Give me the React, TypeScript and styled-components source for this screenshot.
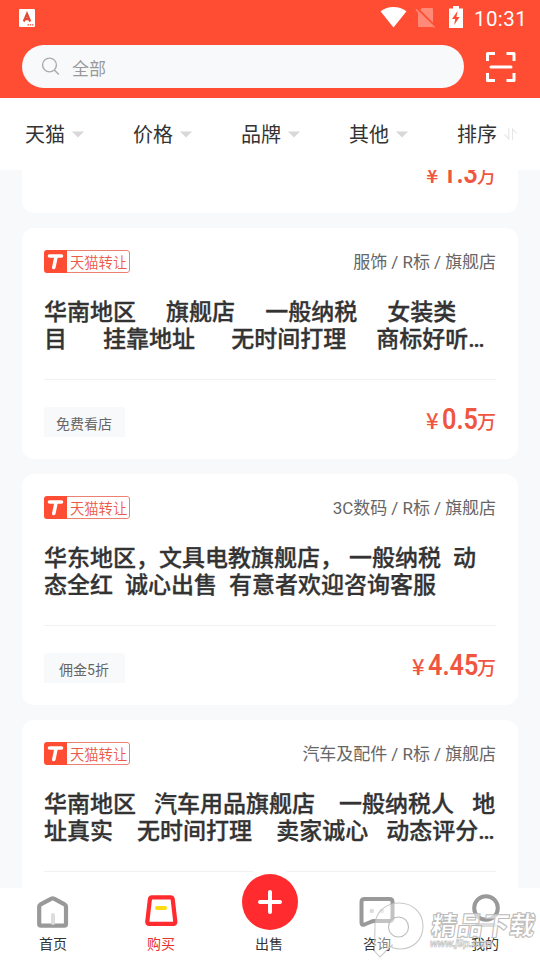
import React from 'react';
import styled, { createGlobalStyle } from 'styled-components';

const GlobalStyle = createGlobalStyle`
  * { box-sizing: border-box; }
  body { margin: 0; background: #f8f9fb; font-family: Roboto, "Noto Sans CJK SC", sans-serif; }
`;

const Screen = styled.div`
  position: relative;
  width: 540px;
  height: 960px;
  display: flex;
  flex-direction: column;
  overflow: hidden;
  background: #f8f9fb;
`;

const Header = styled.header`
  flex: none;
  height: 98px;
  background: #ff4d33;
`;

const StatusBar = styled.div`
  height: 36px;
  padding: 0 13px 0 19px;
  display: flex;
  align-items: center;
  color: #fff;
`;

const StatusIcons = styled.div`
  margin-left: auto;
  display: flex;
  height: 36px;
`;

const Clock = styled.span`
  width: 53px;
  margin-left: 10px;
  font-size: 20.5px;
  font-weight: 450;
  line-height: 38px;
  letter-spacing: 0.4px;
  white-space: nowrap;
`;

const SearchRow = styled.div`
  display: flex;
  align-items: center;
  padding: 9px 24px 0 22px;
  justify-content: space-between;
`;

const SearchBox = styled.div`
  width: 442px;
  height: 43px;
  border-radius: 22px;
  background: #f8f9fb;
  display: flex;
  align-items: center;
  padding-left: 18px;
  gap: 11px;
  color: #999;
  font-size: 17px;
  line-height: 43px;

  span { padding-top: 5px; }
`;

const Filters = styled.nav`
  flex: none;
  height: 72px;
  background: #fff;
  display: grid;
  grid-template-columns: repeat(5, 108px);
`;

const Filter = styled.div`
  display: flex;
  align-items: center;
  padding: 0 0 1px 25px;
  gap: 7px;
  color: #333;
  font-size: 20px;
  white-space: nowrap;

  svg { margin-top: 1px; }
`;

const List = styled.main`
  flex: 1;
  min-height: 0;
  overflow: hidden;
  padding: 0 22px;
  display: flex;
  flex-direction: column;
  gap: 15px;
`;

const Card = styled.article`
  flex: none;
  height: 231px;
  border-radius: 12px;
  background: #fff;
  padding: 22px 22px 0;
`;

const ClippedCard = styled.article`
  flex: none;
  height: 43px;
  overflow: hidden;
  border-radius: 0 0 12px 12px;
  background: #fff;
  padding: 0 22px 22px;
  display: flex;
  justify-content: flex-end;
  align-items: flex-end;
`;

const CardTop = styled.div`
  display: flex;
  height: 23px;
  align-items: center;
  justify-content: space-between;
`;

const Badge = styled.div`
  width: 86px;
  height: 23px;
  display: flex;
  border-radius: 3px;
  overflow: hidden;
  color: #ec5a47;

  svg { flex: none; }
`;

const BadgeLabel = styled.span`
  flex: 1;
  padding-left: 3px;
  border: 1px solid #ec8073;
  border-left: 0;
  border-radius: 0 3px 3px 0;
  font-size: 14.3px;
  line-height: 24px;
  font-weight: 350;
  white-space: nowrap;
`;

const Category = styled.span`
  padding-top: 2px;
  color: #666;
  font-size: 17px;
  line-height: 23px;
  letter-spacing: -0.05px;
`;

const Title = styled.h2`
  margin: 26px 0 0;
  height: 80px;
  color: #333;
  font-size: 23px;
  font-weight: 500;
  line-height: 27px;
  word-spacing: 0.3px;
  white-space: pre;
  -webkit-text-stroke: 0.3px #333;
`;

const CardFooter = styled.div`
  height: 58px;
  border-top: 1px solid #f0f1f2;
  display: flex;
  align-items: flex-end;
  justify-content: space-between;
`;

const Tag = styled.span`
  width: 81px;
  height: 30px;
  padding-right: 1px;
  border-radius: 3px 3px 0 0;
  background: #f8f9fb;
  color: #666;
  font-size: 14px;
  line-height: 34px;
  text-align: center;
`;

const PriceLine = styled.div`
  display: flex;
  align-items: baseline;
  height: 35px;
  color: #f0563f;
  font-size: 19px;
  line-height: 34px;
  font-weight: 500;
`;

const Currency = styled.span`
  width: 17px;
  padding-left: 1px;
  font-family: "Noto Sans CJK SC", sans-serif;
  font-size: 22px;
  line-height: 20px;
`;

const Digits = styled.span<{ $width: number }>`
  width: ${(p) => p.$width}px;
  font-size: 29px;
  font-weight: 650;
  transform: scaleX(0.87);
  transform-origin: left center;
`;

const TabBar = styled.footer`
  flex: none;
  height: 72px;
  background: #fff;
  display: grid;
  grid-template-columns: repeat(5, 108px);
  margin-left: -1px;
  width: 541px;
`;

const Tab = styled.div<{ $active?: boolean }>`
  display: flex;
  flex-direction: column;
  align-items: center;
  color: ${(p) => (p.$active ? '#e8302f' : '#333')};
  font-size: 14px;
  line-height: 20px;

  svg { display: block; margin-top: 4px; height: 42px; flex: none; }
`;

const SellButton = styled.div`
  width: 56px;
  height: 56px;
  margin: -14px 0 4px 2px;
  border-radius: 50%;
  background: #ff2b2e;
  box-shadow: 0 0 0 7px #fff;
  display: flex;
  align-items: center;
  justify-content: center;
  flex: none;

  svg { margin: 0; height: 24px; }
`;

const Watermark = styled.svg`
  position: absolute;
  right: 0;
  bottom: 0;
  pointer-events: none;
`;

const Caret = () => (
  <svg width="12" height="7" viewBox="0 0 12 7"><path d="M0 .5h12L6 6.5z" fill="#d8d8d8" /></svg>
);

const SortIcon = () => (
  <svg width="14" height="14" viewBox="0 0 14 14" fill="none" stroke="#e6e6e6" strokeWidth="1.1">
    <path d="M.5 7.500l4.300 4.500V1M8.500 13V2l4 4.500" />
  </svg>
);

const AppIcon = () => (
  <svg width="16" height="18" viewBox="0 0 16 18">
    <rect width="16" height="18" rx="1" fill="#fff" />
    <path d="M4.800 12.500L8 5l3.200 7.500M5.800 10.200h4.400" fill="none" stroke="#e04a34" strokeWidth="2.300" />
    <path d="M8.500 15.8h6" stroke="#f04832" strokeWidth="1.2" strokeDasharray="1.5 .8" />
  </svg>
);

const SystemIcons = () => (
  <svg width="84" height="36" viewBox="380 0 84 36">
    <path d="M380.5 11.2C388 5.5 399 5.5 406.5 11.2L393.5 27.5z" fill="#fff" />
    <path d="M422 8h10q1 0 1 1v17q0 1-1 1h-13q-1 0-1-1V12z" fill="#ff8a78" />
    <path d="M417.5 9l18 18" stroke="#ff4d33" strokeWidth="2.5" />
    <path d="M416 9.500l18.5 18" stroke="#ff8a78" strokeWidth="1.6" />
    <path d="M449 8.500h4V6h6v2.500h4V28h-14z" fill="#fff" />
    <path d="M457.5 11L452 19h3.2l-1 6 5.4-8h-3.1z" fill="#ff4d33" />
  </svg>
);

const SearchIcon = () => (
  <svg width="21" height="21" viewBox="0 0 21 21" fill="none" stroke="#aaa" strokeWidth="1.4">
    <circle cx="9.500" cy="9" r="6.9" /><path d="M14.300 14l4.500 4.500" />
  </svg>
);

const ScanIcon = () => (
  <svg width="30" height="30" viewBox="0 0 30 30" fill="none" stroke="#fff" strokeWidth="3" strokeLinejoin="round">
    <path d="M1.500 9v-7.500h7.500M20.500 1.500h7.500v7.500M1.500 21v7.500h7.500M20.500 28.500h7.500v-7.500" />
    <path d="M5 15h20" strokeLinecap="round" />
  </svg>
);

const TmallIcon = () => (
  <svg width="23" height="23" viewBox="0 0 23 23">
    <rect width="23" height="23" fill="#ff4d33" />
    <path d="M5.500 6h12M12.2 6L9.800 17.500" fill="none" stroke="#fff" strokeWidth="3.6" strokeLinecap="round" />
  </svg>
);

const HomeIcon = () => (
  <svg width="36" height="42" viewBox="35 892 36 42" fill="none">
    <path d="M39.200 906.500q0-1.200 1-1.800L51.500 898.600q1.200-.7 2.400 0L65 904.700q1 .6 1 1.800V924q0 1.700-1.700 1.700H40.900q-1.700 0-1.700-1.700z" stroke="#999" strokeWidth="4.200" strokeLinejoin="round" />
    <path d="M53 915v8" stroke="#ddd" strokeWidth="4" strokeLinecap="round" />
  </svg>
);

const BuyIcon = () => (
  <svg width="36" height="42" viewBox="143.5 892 36 42" fill="none">
    <path d="M152.500 897.300h18.500q2 0 2.200 2l2.600 22.300q.2 2.300-2 2.300h-24q-2.200 0-2-2.300l2.600-22.300q.2-2 2.100-2z" stroke="#ff2b2e" strokeWidth="4.200" strokeLinejoin="round" />
    <path d="M157.500 908h8" stroke="#ffdc12" strokeWidth="4" strokeLinecap="round" />
  </svg>
);

const ChatIcon = () => (
  <svg width="38" height="42" viewBox="358.5 892 38 42" fill="none">
    <path d="M362 902q0-3 3-3h25q3 0 3 3v16q0 3-3 3h-15q-2 0-4 1l-6 2.500q-3 1-3-2z" stroke="#999" strokeWidth="4" strokeLinejoin="round" />
    <circle cx="372.3" cy="911" r="2.3" fill="#ddd" /><circle cx="382.5" cy="911" r="2.3" fill="#ddd" />
  </svg>
);

const MeIcon = () => (
  <svg width="34" height="42" viewBox="468 892 34 42" fill="none">
    <circle cx="486" cy="908" r="11.8" stroke="#999" strokeWidth="4" />
    <path d="M477 925h18" stroke="#ddd" strokeWidth="4" strokeLinecap="round" />
  </svg>
);

const PlusIcon = () => (
  <svg width="24" height="24" viewBox="0 0 24 24" stroke="#fff" strokeWidth="4" strokeLinecap="round">
    <path d="M2 12h20M12 2v20" />
  </svg>
);

const Price = ({ value, width }: { value: string; width: number }) => (
  <PriceLine>
    <Currency>¥</Currency>
    <Digits $width={width}>{value}</Digits>
    <span>万</span>
  </PriceLine>
);

const filters = ['天猫', '价格', '品牌', '其他', '排序'];

const listings = [
  {
    category: '服饰 / R标 / 旗舰店',
    title: '华南地区     旗舰店     一般纳税     女装类\n目      挂靠地址      无时间打理     商标好听…',
    tag: '免费看店', price: '0.5', width: 35,
  },
  {
    category: '3C数码 / R标 / 旗舰店',
    title: '华东地区，文具电教旗舰店， 一般纳税  动\n态全红  诚心出售  有意者欢迎咨询客服',
    tag: '佣金5折', price: '4.45', width: 49,
  },
  {
    category: '汽车及配件 / R标 / 旗舰店',
    title: '华南地区   汽车用品旗舰店    一般纳税人   地\n址真实    无时间打理    卖家诚心   动态评分…',
  },
];

export default function App() {
  return (
    <Screen lang="zh-CN">
      <GlobalStyle />
      <Header>
        <StatusBar>
          <AppIcon />
          <StatusIcons><SystemIcons /><Clock>10:31</Clock></StatusIcons>
        </StatusBar>
        <SearchRow>
          <SearchBox><SearchIcon /><span>全部</span></SearchBox>
          <ScanIcon />
        </SearchRow>
      </Header>
      <Filters>
        {filters.map((name, i) => (
          <Filter key={name}>{name}{i < 4 ? <Caret /> : <SortIcon />}</Filter>
        ))}
      </Filters>
      <List>
        <ClippedCard><Price value="1.3" width={35} /></ClippedCard>
        {listings.map((item) => (
          <Card key={item.category}>
            <CardTop>
              <Badge><TmallIcon /><BadgeLabel>天猫转让</BadgeLabel></Badge>
              <Category>{item.category}</Category>
            </CardTop>
            <Title>{item.title}</Title>
            <CardFooter>
              {item.tag && <Tag>{item.tag}</Tag>}
              {item.price && <Price value={item.price} width={item.width} />}
            </CardFooter>
          </Card>
        ))}
      </List>
      <TabBar>
        <Tab><HomeIcon />首页</Tab>
        <Tab $active><BuyIcon />购买</Tab>
        <Tab><SellButton><PlusIcon /></SellButton>出售</Tab>
        <Tab><ChatIcon />咨询</Tab>
        <Tab><MeIcon />我的</Tab>
      </TabBar>
      <Watermark width="180" height="64" viewBox="360 896 180 64">
        <path
          d="M375 924C376 911 387 903 399 903C413 903 423 913 423 926C423 940 413 949 400 949Q396 949 392 947.500V945L380 957L374.500 951Z"
          fill="#fff" fillOpacity=".4" stroke="#bbb" strokeOpacity=".8" strokeWidth="1.1"
        />
        <circle cx="398.500" cy="927" r="10" fill="#fff" fillOpacity=".3" stroke="#bbb" strokeWidth="1.1" />
        <g fill="#fff" fillOpacity=".6" stroke="#bbb" fontFamily='"Noto Sans CJK SC", sans-serif' fontWeight="900">
          <text transform="translate(430 934.500) skewX(-8)" fontSize="26" textLength="104" strokeWidth="1">精品下载</text>
          <text x="430" y="947" fontSize="10" textLength="62" strokeWidth=".6" fontFamily="Liberation Sans" fontStyle="italic">www.j9p.com</text>
        </g>
      </Watermark>
    </Screen>
  );
}
